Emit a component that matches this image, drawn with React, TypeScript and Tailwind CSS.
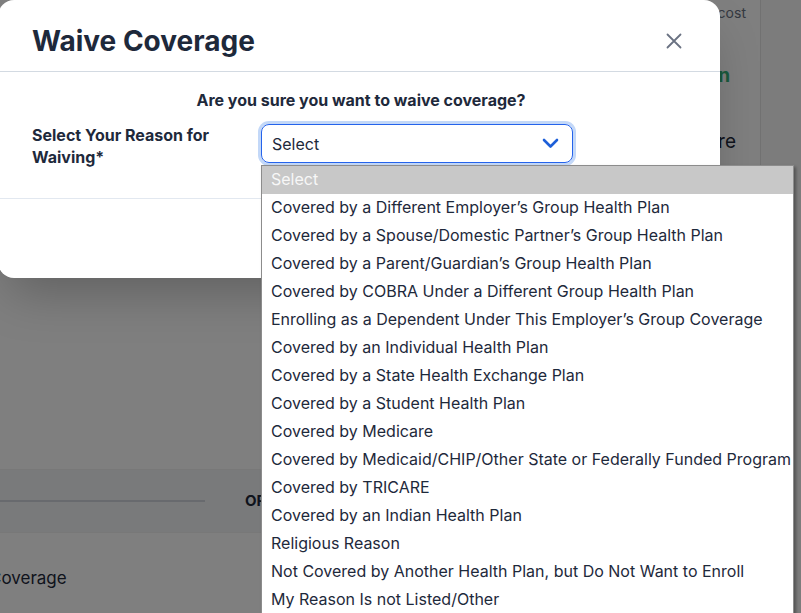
import React from 'react'

const reasons = [
  'Select',
  'Covered by a Different Employer’s Group Health Plan',
  'Covered by a Spouse/Domestic Partner’s Group Health Plan',
  'Covered by a Parent/Guardian’s Group Health Plan',
  'Covered by COBRA Under a Different Group Health Plan',
  'Enrolling as a Dependent Under This Employer’s Group Coverage',
  'Covered by an Individual Health Plan',
  'Covered by a State Health Exchange Plan',
  'Covered by a Student Health Plan',
  'Covered by Medicare',
  'Covered by Medicaid/CHIP/Other State or Federally Funded Program',
  'Covered by TRICARE',
  'Covered by an Indian Health Plan',
  'Religious Reason',
  'Not Covered by Another Health Plan, but Do Not Want to Enroll',
  'My Reason Is not Listed/Other',
]

function BackgroundPage() {
  return (
    <div className="flex h-full w-full bg-white text-[#1e293b]">
      <div className="flex w-[760px] flex-col">
        {/* top plan summary, mostly under the modal */}
        <div className="flex h-[469px] flex-col items-end pr-[14px] pt-[4px]">
          <span className="text-[14px] leading-[18px] text-gray-500">Monthly cost</span>
          <span className="mr-[16px] mt-[42px] text-[19px] font-bold leading-[24px] text-[#34b37a]">
            Current Plan
          </span>
          <span className="mr-[10px] mt-[42px] text-[19px] leading-[24px]">Compare</span>
        </div>
        {/* OR divider */}
        <div className="flex h-[64px] items-center gap-[40px] border-y border-[#f0f0f0] bg-gray-100">
          <div className="h-[2px] w-[205px] bg-gray-300" />
          <span className="text-[15px] font-bold">OR</span>
          <div className="h-[2px] flex-1 bg-gray-300" />
        </div>
        <div className="pt-[33px]">
          <span className="-ml-[11px] text-[17px]">Coverage</span>
        </div>
      </div>
      <div className="flex-1 border-l border-[#e2e2e2] bg-[#f8f8f8]" />
    </div>
  )
}

export default function App() {
  return (
    <div className="relative h-[613px] w-[801px] overflow-hidden font-['Inter','Noto_Sans',sans-serif]">
      <BackgroundPage />

      {/* overlay */}
      <div className="absolute inset-0 bg-black/50" />

      {/* modal */}
      <div className="absolute left-[-2px] top-0 w-[722px] rounded-2xl bg-white shadow-2xl">
        <div className="flex h-[72px] items-center justify-between border-b border-[#d3dae2] pl-[34px] pr-[38px] pt-[11px]">
          <h2 className="text-[28px] font-bold text-[#1e293b]">Waive Coverage</h2>
          <svg width="16" height="16" viewBox="0 0 16 16" className="text-gray-500">
            <path d="M1.5 1.5 L14.5 14.5 M14.5 1.5 L1.5 14.5" stroke="currentColor" strokeWidth="1.8" strokeLinecap="round" />
          </svg>
        </div>

        <div className="border-b border-[#e2e8f0] pb-[30px] pl-[34px] pr-[32px] pt-[16px]">
          <p className="mb-[12px] pl-[2px] text-center text-[16px] font-bold leading-[24px] text-[#1e293b]">
            Are you sure you want to waive coverage?
          </p>
          <div className="flex gap-[16px]">
            <label className="w-[213px] shrink-0 text-[16px] font-bold leading-[22px] text-[#1e293b]">
              Select Your Reason for Waiving*
            </label>
            <div className="flex h-[39px] w-[312px] items-center justify-between rounded-lg border border-[#2563eb] pl-[10px] pr-[13px] ring-[3px] ring-[#c3d8f8]">
              <span className="text-[16px] text-[#1e293b]">Select</span>
              <svg width="17" height="11" viewBox="0 0 17 11" className="text-[#1d5fd8]">
                <polyline points="2,2 8.5,8.5 15,2" fill="none" stroke="currentColor" strokeWidth="2.6" strokeLinecap="round" strokeLinejoin="round" />
              </svg>
            </div>
          </div>
        </div>

        <div className="h-[79px]" />
      </div>

      {/* open select list */}
      <div className="absolute left-[261px] top-[165px] w-[533px] border border-[#8c8c8c] bg-white shadow-[2px_2px_3px_rgba(0,0,0,0.35)]">
        {reasons.map((r, i) => (
          <div
            key={r}
            className={`flex h-[28px] items-center whitespace-nowrap pb-[2px] pl-[9px] text-[16px] ${
              i === 0 ? 'bg-[#c8c8c8] text-[#f7f7f7]' : 'text-[#1e293b]'
            }`}
          >
            {r}
          </div>
        ))}
      </div>
    </div>
  )
}
